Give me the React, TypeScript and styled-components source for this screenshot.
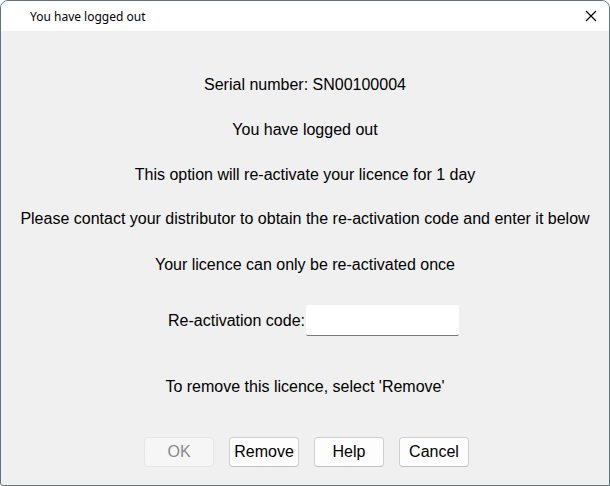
import React from "react";
import styled, { createGlobalStyle } from "styled-components";

const Global = createGlobalStyle`
  html, body { margin: 0; padding: 0; background: #ffffff; }
  #root { width: 610px; height: 486px; }
`;

const Window = styled.div`
  box-sizing: border-box;
  width: 610px;
  height: 486px;
  border: 1px solid #5f7480;
  border-radius: 8px 8px 0 3px;
  background: #f0f0f0;
  display: flex;
  flex-direction: column;
  overflow: hidden;
`;

const TitleBar = styled.div`
  height: 30px;
  flex: none;
  background: #ffffff;
  display: flex;
  align-items: center;
  justify-content: space-between;
  padding: 0 0 0 29px;
  font-family: "Noto Sans", "Open Sans", sans-serif;
  font-size: 12px;
  color: #000;
`;

const Title = styled.span`
  margin-top: 1px;
`;

const CloseButton = styled.div`
  width: 36px;
  height: 30px;
  display: flex;
  align-items: center;
  justify-content: center;
`;

const Body = styled.div`
  flex: 1;
  display: flex;
  flex-direction: column;
  align-items: center;
  padding-top: 44px;
  font-family: "Liberation Sans", Arial, sans-serif;
  font-size: 16px;
  color: #000;
`;

const Line = styled.div<{ $gap?: number }>`
  line-height: 20px;
  height: 20px;
  white-space: nowrap;
  margin-top: ${(p) => p.$gap ?? 0}px;
`;

const CodeRow = styled.div`
  display: flex;
  align-items: center;
  margin-top: 30px;
  margin-left: 17px;
  height: 31px;
`;

const Label = styled.label`
  white-space: nowrap;
  margin-right: 1px;
`;

const CodeInput = styled.input`
  box-sizing: border-box;
  width: 153px;
  height: 31px;
  border: none;
  border-bottom: 1px solid #7a7a7a;
  border-radius: 2px;
  background: #ffffff;
  outline: none;
  padding: 0 6px;
  font: inherit;
`;

const ButtonRow = styled.div`
  display: flex;
  gap: 15px;
  margin-top: 40px;
  margin-left: 3px;
`;

const Button = styled.button`
  box-sizing: border-box;
  width: 70px;
  height: 30px;
  border: 1px solid #d0d0d0;
  border-bottom-color: #c0c0c0;
  border-radius: 4px;
  background: #fdfdfd;
  color: #000;
  font-family: "Liberation Sans", Arial, sans-serif;
  font-size: 16px;
  padding: 0;
  &:disabled {
    background: #f6f6f6;
    border-color: #e6e6e6;
    color: #8a8a8a;
  }
`;

export default function App() {
  return (
    <>
      <Global />
      <Window>
        <TitleBar>
          <Title>You have logged out</Title>
          <CloseButton>
            <svg width="12" height="12" viewBox="0 0 12 12">
              <path d="M1 1 L11 11 M11 1 L1 11" stroke="#000" strokeWidth="1.1" fill="none" />
            </svg>
          </CloseButton>
        </TitleBar>
        <Body>
          <Line>Serial number: SN00100004</Line>
          <Line $gap={25}>You have logged out</Line>
          <Line $gap={25}>This option will re-activate your licence for 1 day</Line>
          <Line $gap={24}>Please contact your distributor to obtain the re-activation code and enter it below</Line>
          <Line $gap={26}>Your licence can only be re-activated once</Line>
          <CodeRow>
            <Label>Re-activation code:</Label>
            <CodeInput />
          </CodeRow>
          <Line $gap={41}>To remove this licence, select 'Remove'</Line>
          <ButtonRow>
            <Button disabled>OK</Button>
            <Button>Remove</Button>
            <Button>Help</Button>
            <Button>Cancel</Button>
          </ButtonRow>
        </Body>
      </Window>
    </>
  );
}
